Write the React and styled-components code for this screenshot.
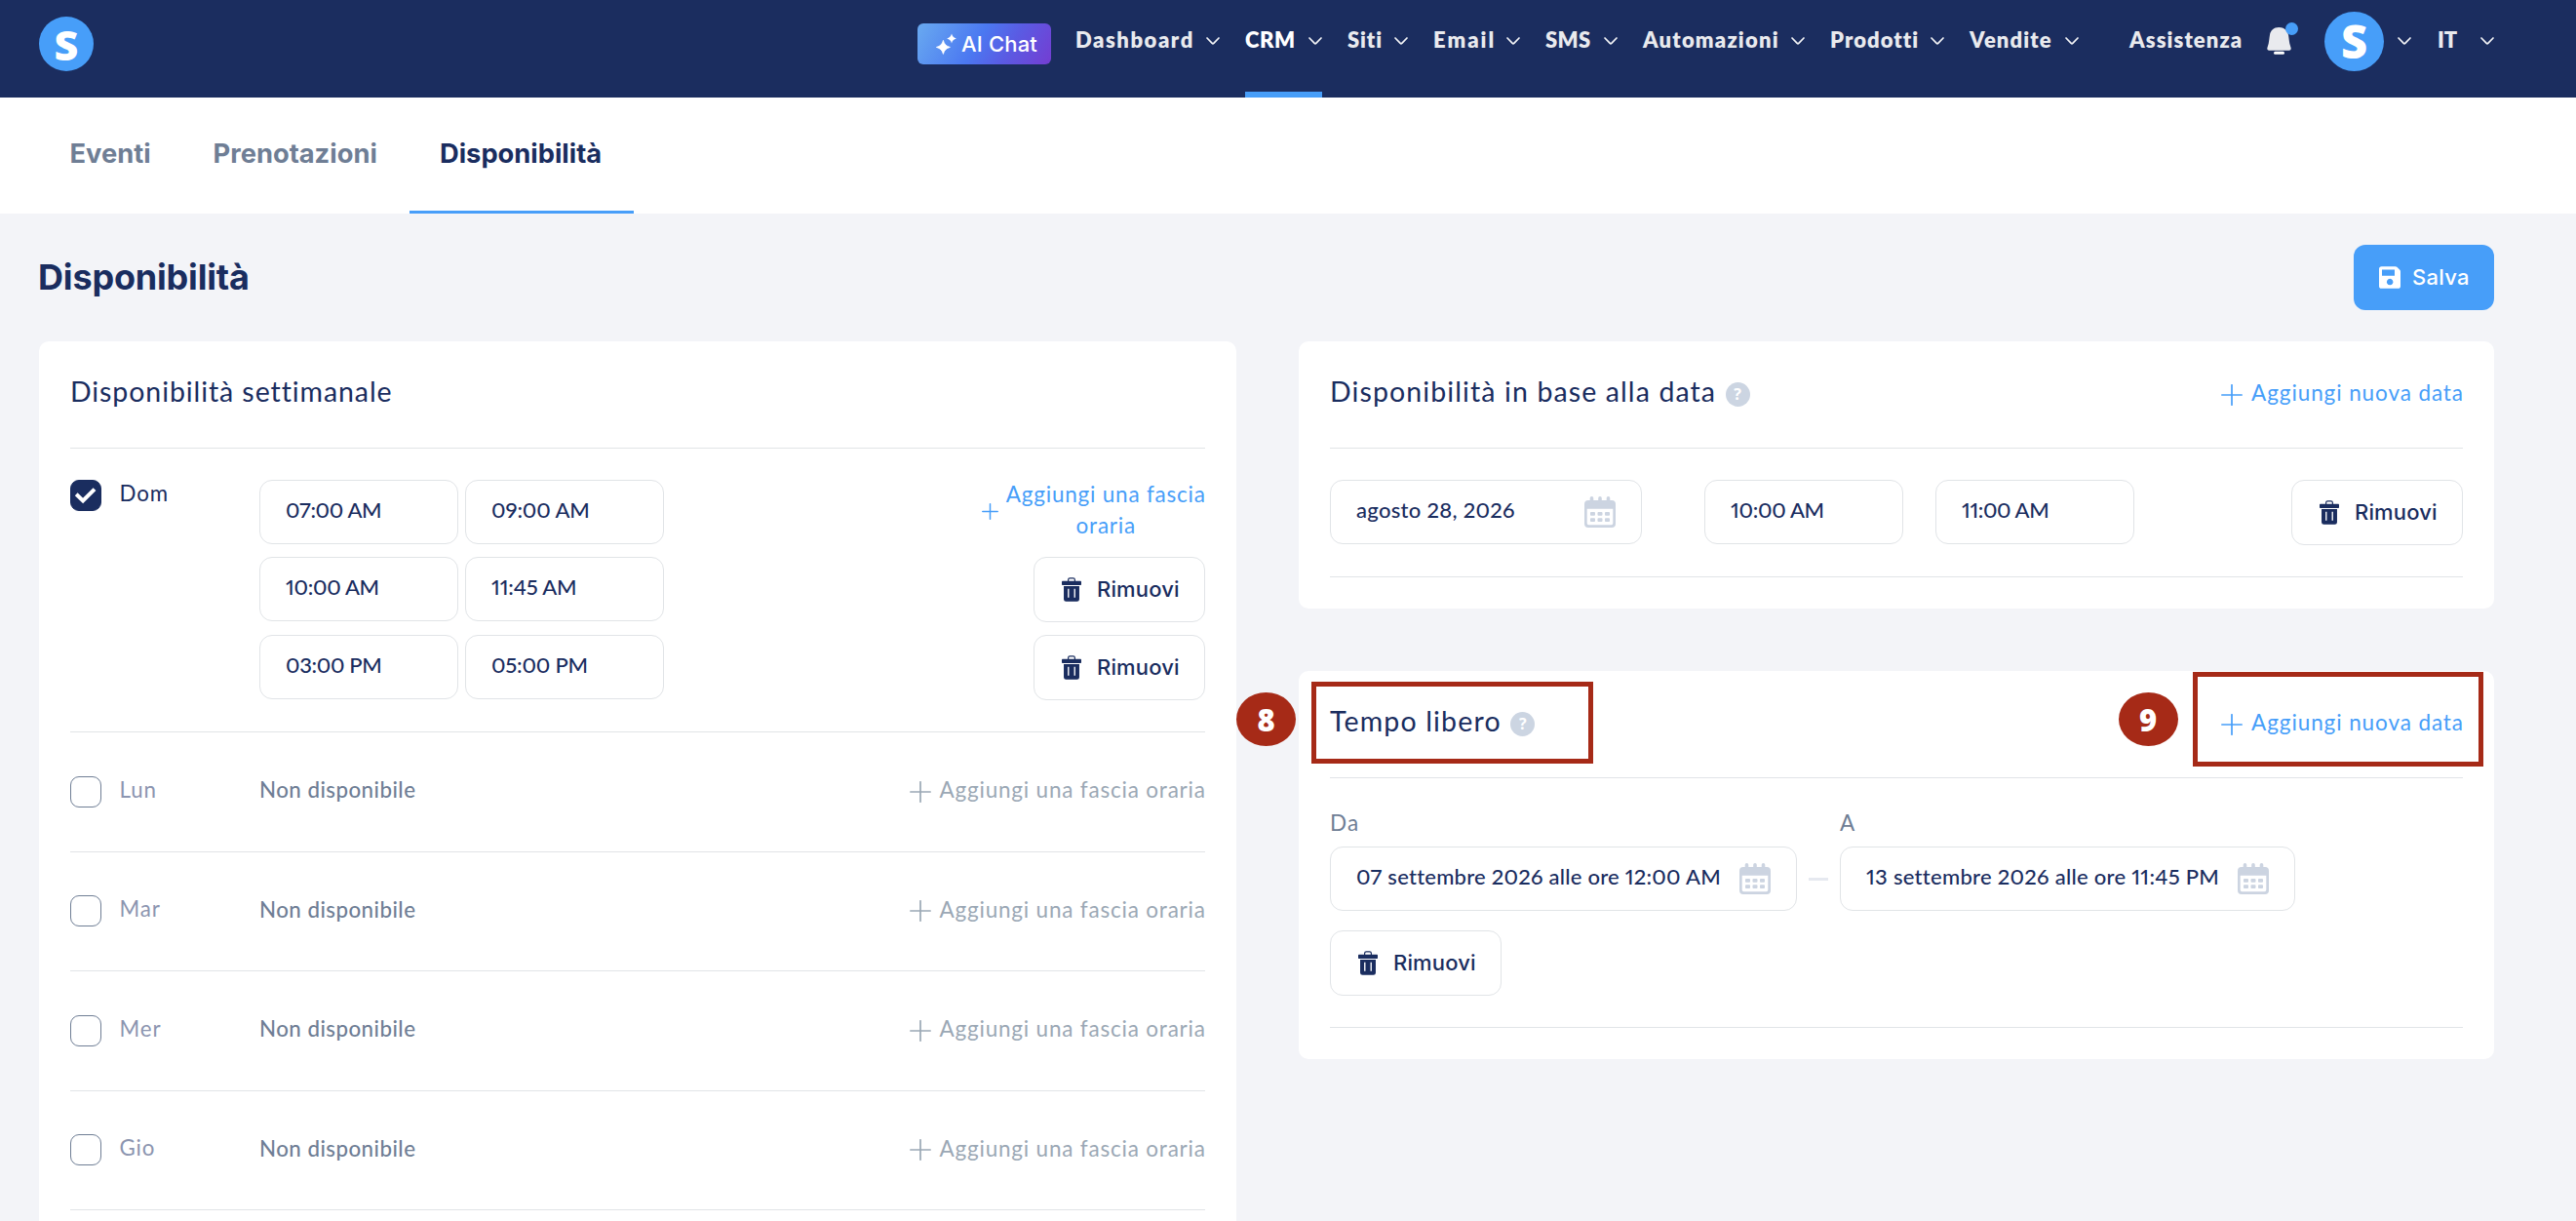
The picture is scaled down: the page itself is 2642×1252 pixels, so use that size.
import React from 'react';
import styled, { createGlobalStyle } from 'styled-components';

const navy = '#1a2d5f';
const blue = '#479ef9';
const slate = '#6f7e95';
const line = '#e1e4e7';
const lato = 'Lato, "Open Sans", sans-serif';
const inter = 'Inter, Roboto, sans-serif';

const GlobalStyle = createGlobalStyle`
  * { box-sizing: border-box; }
  body { margin: 0; background: #f3f4f8; color: ${navy}; font-family: ${lato}; }
  svg { display: block; flex: none; }
`;

const Page = styled.div`
  height: 1252px;
  overflow: hidden;
  display: flex;
  flex-direction: column;
`;

/* ---------- Top bar ---------- */
const Header = styled.header`
  flex: none;
  height: 100px;
  padding: 0 84px 0 40px;
  background: #1b2d5f;
  display: flex;
  justify-content: space-between;
`;

const Logo = styled.div`
  flex: none;
  width: ${p => p.$size}px;
  height: ${p => p.$size}px;
  margin-top: ${p => p.$top}px;
  border-radius: 50%;
  background: ${blue};
  color: #fff;
  display: flex;
  align-items: center;
  justify-content: center;
  font: normal 800 ${p => p.$font}px/1 "Open Sans", "Noto Sans", sans-serif;
`;

const Nav = styled.nav`
  display: flex;
  height: 100px;
`;

const AiButton = styled.button`
  width: 137px;
  height: 42px;
  margin: 24px 25px 0 0;
  padding: 0 0 0 19px;
  border: 0;
  border-radius: 6px;
  background: linear-gradient(120deg, #69aaf0 0%, #4b78f1 45%, #5a5be3 68%, #743dd2 100%);
  color: #fff;
  font: 500 22px/42px ${inter};
  letter-spacing: 0.16px;
  display: flex;
  align-items: center;
  gap: 5px;
  white-space: nowrap;
`;

const Menu = styled.div`
  display: flex;
  gap: 26px;
`;

const NavItem = styled.a`
  width: ${p => p.$w}px;
  height: 100px;
  padding-bottom: 20px;
  display: flex;
  align-items: center;
  justify-content: space-between;
  color: ${p => (p.$active ? '#fff' : '#e9eaee')};
  box-shadow: ${p => (p.$active ? `inset 0 -6px 0 ${blue}` : 'none')};
  font-size: 22px;
  font-weight: 800;
  letter-spacing: ${p => p.$ls}px;
  white-space: nowrap;
  svg { margin-top: 3px; }
`;

const Support = styled(NavItem)`
  margin-left: 52px;
`;

const Bell = styled.div`
  position: relative;
  width: 25px;
  height: 28px;
  margin: 28px 34px 0 27px;
`;

const BellDot = styled.i`
  position: absolute;
  left: 19px;
  top: -5px;
  width: 13px;
  height: 13px;
  border-radius: 50%;
  background: ${blue};
`;

const Account = styled.div`
  display: flex;
  gap: 14px;
  margin-right: 27px;
  > svg { margin-top: 38px; }
`;

/* ---------- Section tabs ---------- */
const Tabs = styled.div`
  flex: none;
  height: 119px;
  padding-left: 40px;
  background: #fff;
  display: flex;
`;

const Tab = styled.a`
  width: ${p => p.$w}px;
  height: 119px;
  padding: 0 0 4px ${p => p.$pad}px;
  display: flex;
  align-items: center;
  font: 700 27.3px/1 ${inter};
  letter-spacing: 0;
  color: ${p => (p.$active ? navy : slate)};
  box-shadow: ${p => (p.$active ? `inset 0 -3px 0 ${blue}` : 'none')};
`;

/* ---------- Page heading ---------- */
const TitleBar = styled.div`
  flex: none;
  height: 131px;
  padding: 32px 84px 0 39px;
  display: flex;
  justify-content: space-between;
`;

const PageTitle = styled.h1`
  margin: 0;
  font: 700 36px/66px ${inter};
  letter-spacing: -0.18px;
`;

const SaveButton = styled.button`
  width: 144px;
  height: 67px;
  border: 0;
  border-radius: 12px;
  background: ${blue};
  color: #fff;
  font: 500 22px/67px ${inter};
  letter-spacing: 0.27px;
  display: flex;
  align-items: center;
  padding: 0 0 0 26px;
  gap: 12px;
`;

/* ---------- Cards ---------- */
const Columns = styled.main`
  flex: 1;
  min-height: 0;
  padding: 0 84px 0 40px;
  display: grid;
  grid-template-columns: 1228px 1226px;
  column-gap: 64px;
  align-items: start;
`;

const Stack = styled.div`
  display: grid;
  gap: 64px;
`;

const Card = styled.section`
  position: relative;
  padding: 0 32px 32px;
  background: #fff;
  border-radius: 10px;
`;

const CardHead = styled.div`
  height: 110px;
  border-bottom: 1px solid ${line};
  display: flex;
  align-items: center;
  justify-content: space-between;
`;

const CardTitle = styled.h2`
  margin: 0;
  display: flex;
  align-items: center;
  gap: ${p => p.$gap}px;
  font-size: 28.5px;
  font-weight: 400;
  span { line-height: 34px; padding-bottom: 7px; letter-spacing: ${p => p.$ls}px; }
`;

const Help = styled.i`
  width: 25px;
  height: 25px;
  border-radius: 50%;
  background: #ccd5e2;
  color: #fff;
  font: normal 700 16px/25px "Open Sans", sans-serif;
  text-align: center;
`;

const Link = styled.a`
  display: inline-flex;
  align-items: center;
  gap: ${p => p.$gap ?? 8}px;
  color: ${p => (p.$muted ? '#9ba8b5' : blue)};
  font-size: 22.5px;
  letter-spacing: ${p => p.$ls}px;
  white-space: nowrap;
  span { line-height: 32px; padding-bottom: 3px; margin-right: -${p => p.$ls}px; }
`;

const SplitLink = styled(Link)`
  height: 67px;
  align-items: flex-start;
  margin-top: -1px;
  svg { margin-top: 25px; }
  span { width: 205px; padding: 0; text-align: center; white-space: normal; }
`;

/* ---------- Day rows ---------- */
const DayRow = styled.div`
  height: ${p => (p.$open ? 291 : 122.5)}px;
  padding-top: ${p => (p.$open ? 32 : 0)}px;
  border-bottom: 1px solid ${line};
  display: flex;
  align-items: ${p => (p.$open ? 'flex-start' : 'center')};
`;

const Day = styled.label`
  width: 194px;
  display: flex;
  align-items: center;
  gap: 18.5px;
  font-size: 22.3px;
  letter-spacing: 0.9px;
  color: ${p => (p.$on ? navy : '#8c95b0')};
  span { line-height: 28px; padding-bottom: 4px; }
`;

const Box = styled.i`
  width: 32px;
  height: 32px;
  border-radius: 9px;
  border: 1px solid ${p => (p.$on ? navy : slate)};
  background: ${p => (p.$on ? navy : '#fff')};
  display: flex;
  svg { margin: -1px; }
`;

const Unavailable = styled.span`
  flex: 1;
  padding-bottom: 4px;
  color: ${slate};
  font-size: 22.3px;
  font-weight: 500;
  letter-spacing: 0.47px;
`;

const Slots = styled.div`
  flex: 1;
  display: grid;
  grid-template-rows: 67px 68px 67px;
  row-gap: 12px;
`;

const Slot = styled.div`
  display: flex;
  align-items: flex-start;
  gap: 7px;
  > :last-child { margin-left: auto; }
`;

const Input = styled.div`
  flex: none;
  width: ${p => p.$w ?? 204}px;
  height: 66px;
  padding: 0 26px;
  border: 1px solid ${line};
  border-radius: 13px;
  background: #fff;
  display: flex;
  align-items: center;
  justify-content: space-between;
  font-size: 22px;
  font-weight: 500;
  font-variant-numeric: proportional-nums;
  letter-spacing: ${p => p.$ls ?? 0.1}px;
  white-space: nowrap;
  span { padding-bottom: 5px; }
`;

const RemoveButton = styled.button`
  flex: none;
  width: 176px;
  height: 67px;
  padding: 0 0 0 28px;
  border: 1px solid ${line};
  border-radius: 13px;
  background: #fff;
  color: ${navy};
  font: 500 22px/65px ${inter};
  letter-spacing: 0.15px;
  display: flex;
  align-items: center;
  gap: 16px;
`;

/* ---------- Date rows ---------- */
const DateRow = styled.div`
  height: 132px;
  padding-top: 32px;
  border-bottom: 1px solid ${line};
  display: flex;
  align-items: flex-start;
  > :nth-child(2) { margin-left: 64px; }
  > :nth-child(3) { margin-left: 33px; }
  > :last-child { margin-left: auto; }
`;

const TimeOff = styled.div`
  height: 256px;
  padding-top: 29px;
  border-bottom: 1px solid ${line};
`;

const Range = styled.div`
  display: flex;
  align-items: flex-end;
  gap: 12px;
  margin-bottom: 20px;
`;

const Field = styled.div`
  display: grid;
  gap: 8px;
`;

const FieldLabel = styled.span`
  color: ${slate};
  font-size: 22.5px;
  line-height: 32px;
  padding-top: 1px;
  letter-spacing: 1.2px;
`;

const Dash = styled.i`
  width: 20px;
  height: 3px;
  margin-bottom: 31px;
  background: #e6e9f0;
`;

/* ---------- Callouts ---------- */
const Frame = styled.div`
  position: absolute;
  left: ${p => p.$x}px;
  top: ${p => p.$y}px;
  width: ${p => p.$w}px;
  height: ${p => p.$h}px;
  border: 5px solid #a62a17;
`;

const Marker = styled.div`
  position: absolute;
  left: ${p => p.$x}px;
  top: 22px;
  width: 61px;
  height: 55px;
  border-radius: 50%;
  background: #a62a17;
  color: #fff;
  font: 800 31px/57px "Open Sans", "Noto Sans", sans-serif;
  text-align: center;
`;

/* ---------- Icons ---------- */
const Caret = () => (
  <svg width="14" height="8" viewBox="0 0 14 8" fill="none" stroke="#f1f2f5" strokeWidth="1.7" strokeLinecap="round" strokeLinejoin="round">
    <path d="M1 1l5.2 5.4q.8.7 1.6 0L13 1" />
  </svg>
);

const Sparkles = () => (
  <svg width="21" height="22" viewBox="0 0 21 22" fill="#fff">
    <path d="M7.4 7.4q1.3 5.7 7 7-5.7 1.3-7 7-1.3-5.7-7-7 5.7-1.3 7-7z" stroke="#fff" strokeWidth=".8" strokeLinejoin="round" />
    <path d="M16 .6q.9 4 4.9 4.9-4 .9-4.9 4.9-.9-4-4.9-4.9 4-.9 4.9-4.9z" />
  </svg>
);

const BellIcon = () => (
  <svg width="25" height="28" viewBox="0 0 75 84" fill="#e9eaee">
    <path d="M37 0C21 0 11 10 9 23 7 33 7 41 5 50L1 64Q0 71 7 71H68Q75 71 74 64L70 50C68 41 68 33 66 23 63 10 53 0 37 0z" />
    <rect x="21" y="74" width="33" height="9.5" rx="4.5" fill="#fff" />
  </svg>
);

const SaveIcon = () => (
  <svg width="22" height="23" viewBox="0 0 66 68" fill="#fff">
    <path fillRule="evenodd" d="M8 0H50Q53 0 55 2L64 11Q66 13 66 16V60Q66 68 58 68H8Q0 68 0 60V8Q0 0 8 0zM9 10V29H48V10zM33.5 38a9.8 9.8 0 1 0 .01 0z" />
  </svg>
);

const Plus = ({ size = 22, stroke = 1.7 }) => (
  <svg width={size} height={size} viewBox={`0 0 ${size} ${size}`} stroke="currentColor" strokeWidth={stroke} strokeLinecap="round">
    <path d={`M${size / 2} .8V${size - 0.8}M.8 ${size / 2}H${size - 0.8}`} />
  </svg>
);

const Trash = () => (
  <svg width="20" height="25" viewBox="0 0 59 73" fill={navy}>
    <path d="M19.5 12V7Q19.5 2 24.5 2H34.5Q39.5 2 39.5 7V12" fill="none" stroke={navy} strokeWidth="3.5" />
    <rect x="0" y="11" width="59" height="12" rx="2" />
    <path fillRule="evenodd" d="M6 26H53V66Q53 73 46 73H13Q6 73 6 66zM18 34V61H22V34zM37 34V61H41V34z" />
  </svg>
);

const Calendar = () => (
  <svg width="32" height="32" viewBox="0 0 32 32" fill="#ccd4e1">
    <rect x="5.7" y="0" width="3.6" height="8" rx="1.8" />
    <rect x="14.2" y="0" width="3.6" height="8" rx="1.8" />
    <rect x="22.7" y="0" width="3.6" height="8" rx="1.8" />
    <path fillRule="evenodd" d="M4 4H28Q32 4 32 8V28Q32 32 28 32H4Q0 32 0 28V8Q0 4 4 4zM2.7 12.8V27.5Q2.7 29.3 4.5 29.3H27.5Q29.3 29.3 29.3 27.5V12.8z" />
    {[16, 22.2].map(y => [6, 13.5, 21].map(x => <rect key={`${x}-${y}`} x={x} y={y} width="5" height="3.7" rx=".9" />))}
  </svg>
);

const Check = () => (
  <svg width="32" height="32" viewBox="0 0 32 32" fill="none" stroke="#fff" strokeWidth="4">
    <path d="M6.2 14.8l6.9 6.6L25 9.6" />
  </svg>
);

/* ---------- Content ---------- */
const navItems = [
  { label: 'Dashboard', w: 148, ls: 1.55 },
  { label: 'CRM', w: 79, ls: 0.6, active: true },
  { label: 'Siti', w: 62, ls: 0.9 },
  { label: 'Email', w: 89, ls: 2 },
  { label: 'SMS', w: 74, ls: 0.3 },
  { label: 'Automazioni', w: 166, ls: 1.2 },
  { label: 'Prodotti', w: 117, ls: 1.05 },
  { label: 'Vendite', w: 112, ls: 1.1 },
];

const slots = [
  { from: '07:00 AM', to: '09:00 AM', a: -0.35, b: -0.1 },
  { from: '10:00 AM', to: '11:45 AM', a: -0.3, b: -0.15 },
  { from: '03:00 PM', to: '05:00 PM', a: -0.35, b: -0.2 },
];

const closedDays = ['Lun', 'Mar', 'Mer', 'Gio'];

const Remove = () => (
  <RemoveButton><Trash />Rimuovi</RemoveButton>
);

const AddDate = () => (
  <Link $ls={0.9} $gap={9}><Plus /><span>Aggiungi nuova data</span></Link>
);

export default function App() {
  return (
    <Page>
      <GlobalStyle />
      <Header>
        <Logo $size={56} $top={17} $font={43}>S</Logo>
        <Nav>
          <AiButton><Sparkles />AI Chat</AiButton>
          <Menu>
            {navItems.map(i => (
              <NavItem key={i.label} $w={i.w} $ls={i.ls} $active={i.active}>{i.label}<Caret /></NavItem>
            ))}
          </Menu>
          <Support $w={114} $ls={1.1}>Assistenza</Support>
          <Bell><BellIcon /><BellDot /></Bell>
          <Account>
            <Logo $size={61} $top={11.5} $font={47}>S</Logo>
            <Caret />
          </Account>
          <NavItem $w={58} $ls={0}>IT<Caret /></NavItem>
        </Nav>
      </Header>

      <Tabs>
        <Tab $w={146} $pad={31.5}>Eventi</Tab>
        <Tab $w={233.5} $pad={32.5}>Prenotazioni</Tab>
        <Tab $w={230} $pad={31.5} $active>Disponibilità</Tab>
      </Tabs>

      <TitleBar>
        <PageTitle>Disponibilità</PageTitle>
        <SaveButton><SaveIcon />Salva</SaveButton>
      </TitleBar>

      <Columns>
        <Card>
          <CardHead><CardTitle $ls={0.92}><span>Disponibilità settimanale</span></CardTitle></CardHead>
          <DayRow $open>
            <Day $on><Box $on><Check /></Box><span>Dom</span></Day>
            <Slots>
              {slots.map((s, i) => (
                <Slot key={s.from}>
                  <Input $ls={s.a}><span>{s.from}</span></Input>
                  <Input $ls={s.b}><span>{s.to}</span></Input>
                  {i === 0
                    ? <SplitLink $ls={0.78}><Plus size={17} stroke={1.5} /><span>Aggiungi una fascia oraria</span></SplitLink>
                    : <Remove />}
                </Slot>
              ))}
            </Slots>
          </DayRow>
          {closedDays.map(d => (
            <DayRow key={d}>
              <Day><Box /><span>{d}</span></Day>
              <Unavailable>Non disponibile</Unavailable>
              <Link $muted $ls={0.8}><Plus /><span>Aggiungi una fascia oraria</span></Link>
            </DayRow>
          ))}
        </Card>

        <Stack>
          <Card>
            <CardHead>
              <CardTitle $ls={1.11} $gap={9.5}><span>Disponibilità in base alla data</span><Help>?</Help></CardTitle>
              <AddDate />
            </CardHead>
            <DateRow>
              <Input $w={320} $ls={0.3}><span>agosto 28, 2026</span><Calendar /></Input>
              <Input $ls={-0.3}><span>10:00 AM</span></Input>
              <Input $ls={-0.4}><span>11:00 AM</span></Input>
              <Remove />
            </DateRow>
          </Card>

          <Card>
            <CardHead>
              <CardTitle $ls={1.16} $gap={9.5}><span>Tempo libero</span><Help>?</Help></CardTitle>
              <AddDate />
            </CardHead>
            <TimeOff>
              <Range>
                <Field>
                  <FieldLabel>Da</FieldLabel>
                  <Input $w={479} $ls={0.24}><span>07 settembre 2026 alle ore 12:00 AM</span><Calendar /></Input>
                </Field>
                <Dash />
                <Field>
                  <FieldLabel>A</FieldLabel>
                  <Input $w={467} $ls={0.28}><span>13 settembre 2026 alle ore 11:45 PM</span><Calendar /></Input>
                </Field>
              </Range>
              <Remove />
            </TimeOff>
            <Frame $x={13} $y={11} $w={289} $h={84} />
            <Marker $x={-64}>8</Marker>
            <Marker $x={840.5}>9</Marker>
            <Frame $x={917} $y={1} $w={298} $h={97} />
          </Card>
        </Stack>
      </Columns>
    </Page>
  );
}
